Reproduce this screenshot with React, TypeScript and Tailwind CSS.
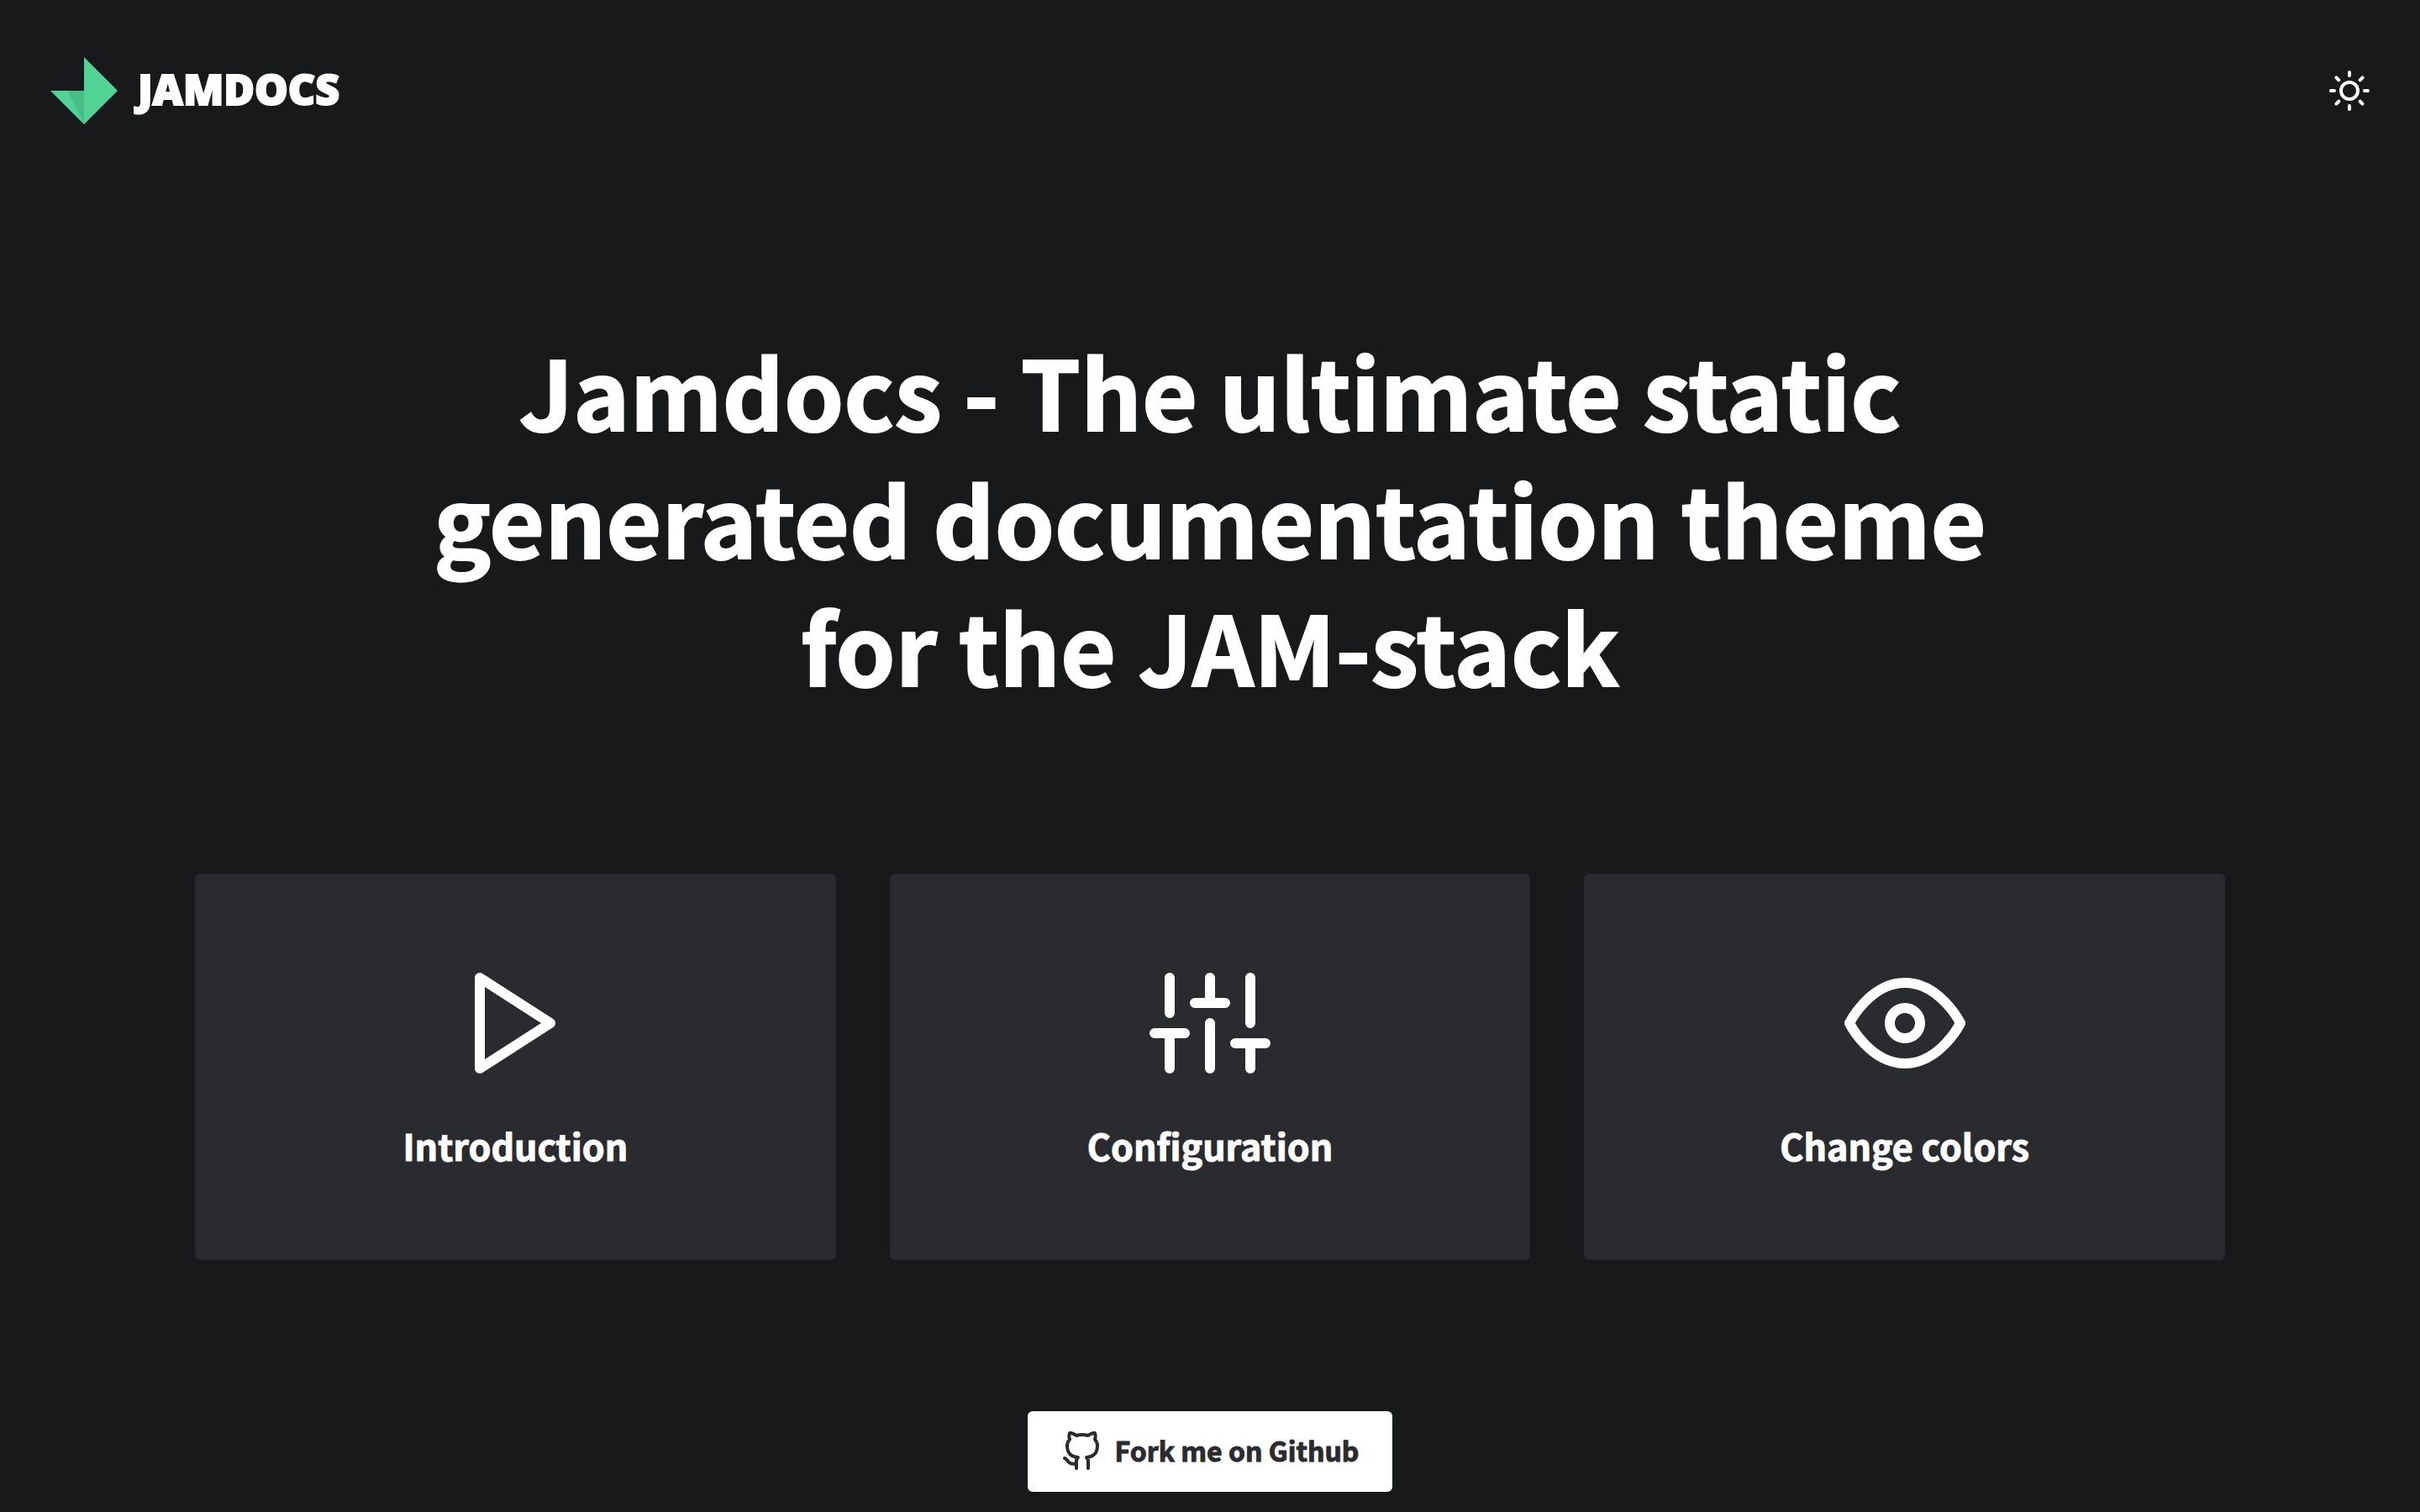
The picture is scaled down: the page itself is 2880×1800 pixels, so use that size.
import type { ReactNode } from "react";

type IconProps = { className: string; children: ReactNode };

function Icon({ className, children }: IconProps) {
  return (
    <svg
      viewBox="0 0 24 24"
      fill="none"
      stroke="currentColor"
      strokeWidth="2"
      strokeLinecap="round"
      strokeLinejoin="round"
      aria-hidden="true"
      className={className}
    >
      {children}
    </svg>
  );
}

const cards = [
  {
    title: "Introduction",
    href: "#introduction",
    icon: <polygon points="5 3 19 12 5 21 5 3" />,
  },
  {
    title: "Configuration",
    href: "#configuration",
    icon: (
      <path d="M4 21v-7M4 10V3M12 21v-9M12 8V3M20 21v-5M20 12V3M1 14h6M9 8h6M17 16h6" />
    ),
  },
  {
    title: "Change colors",
    href: "#change-colors",
    icon: (
      <>
        <path d="M1 12s4-8 11-8 11 8 11 8-4 8-11 8-11-8-11-8z" />
        <circle cx="12" cy="12" r="3" />
      </>
    ),
  },
];

function Logo() {
  return (
    <a href="#home" className="flex items-center gap-6">
      <svg viewBox="0 0 80 80" aria-hidden="true" className="size-20">
        <path d="M40 0l40 40-40 40z" fill="#50d395" />
        <path d="M0 40h40v40z" fill="#50d395" />
        <path d="M20 40h20v40z" fill="#48be86" />
      </svg>
      <span className="pb-1 font-['Open_Sans',sans-serif] text-[50px] leading-none font-extrabold [-webkit-text-stroke:2px_currentColor]">
        JAMDOCS
      </span>
    </a>
  );
}

export default function App() {
  return (
    <div className="min-h-screen bg-[#18191b] pb-6 font-['Noto_Sans_CJK_SC',sans-serif] font-bold text-white">
      <header className="flex items-center justify-between px-[60px] py-[68px]">
        <Logo />
        <button type="button" aria-label="Toggle color theme">
          <Icon className="size-12">
            <circle cx="12" cy="12" r="5" />
            <path d="M12 1v2M12 21v2M4.22 4.22l1.42 1.42M18.36 18.36l1.42 1.42M1 12h2M21 12h2M4.22 19.78l1.42-1.42M18.36 5.64l1.42-1.42" />
          </Icon>
        </button>
      </header>
      <main className="mx-auto flex max-w-[2480px] flex-col items-center px-8 pt-[172px]">
        <h1 className="max-w-[1920px] text-center text-[114px] leading-[152px] [-webkit-text-stroke:2px_currentColor]">
          Jamdocs - The ultimate static generated documentation theme for the
          JAM-stack
        </h1>
        <nav
          aria-label="Documentation sections"
          className="mt-[196px] grid w-full grid-cols-3 gap-16"
        >
          {cards.map((card) => (
            <a
              key={card.title}
              href={card.href}
              className="flex flex-col items-center gap-10 rounded-md border-2 border-[#28292c] bg-[#2a2b2f] pt-[104px] pb-[102px]"
            >
              <Icon className="size-36">{card.icon}</Icon>
              <span className="text-[43px] leading-[66px] [-webkit-text-stroke:1px_currentColor]">
                {card.title}
              </span>
            </a>
          ))}
        </nav>
        <a
          href="#github"
          className="mt-[180px] flex h-24 items-center gap-4 rounded-md bg-white px-10 text-[32px] leading-[48px] text-[#2a2b2f]"
        >
          <Icon className="size-12">
            <path d="M9 19c-5 1.5-5-2.5-7-3m14 6v-3.87a3.37 3.37 0 0 0-.94-2.61c3.14-.35 6.44-1.54 6.44-7A5.44 5.44 0 0 0 20 4.77 5.07 5.07 0 0 0 19.91 1S18.73.65 16 2.48a13.38 13.38 0 0 0-7 0C6.27.65 5.09 1 5.09 1A5.07 5.07 0 0 0 5 4.77a5.44 5.44 0 0 0-1.5 3.78c0 5.42 3.3 6.61 6.44 7A3.37 3.37 0 0 0 9 18.13V22" />
          </Icon>
          <span className="pb-1 [-webkit-text-stroke:1px_currentColor]">
            Fork me on Github
          </span>
        </a>
      </main>
    </div>
  );
}
